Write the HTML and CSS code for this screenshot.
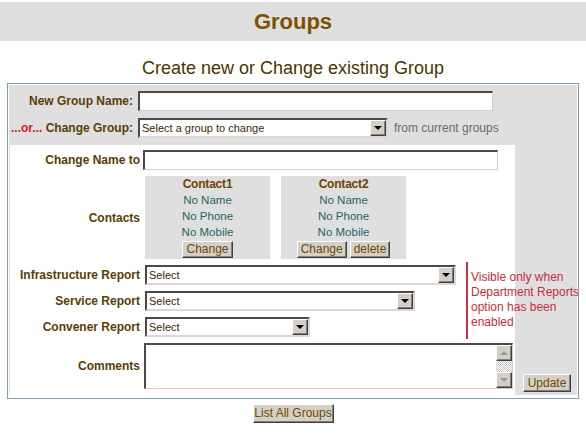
FILE: index.html
```html
<html>
  <head>
    <title>
    Groups
    </title>
    <link rel="stylesheet" href="styles.css">
  </head>
  <body>
    <div class="banner">Groups</div>
    <div class="subtitle">Create new or Change existing Group</div>
    <div class="frame">
      <div class="panel">
        <div class="pick">
          <label class="lbl">New Group Name:</label>
          <input class="txt name-new" type="text">
          <label class="lbl"><span class="or">...or...</span> Change Group:</label>
          <div class="pick-row">
            <div class="sel w250">
              <select><option>Select a group to change</option></select>
              <span class="drop"><i class="tri-down"></i></span>
            </div>
            <span class="hint">from current groups</span>
          </div>
        </div>
        <div class="body">
          <div class="main">
            <label class="lbl">Change Name to</label>
            <input class="txt name-chg" type="text">

            <label class="lbl">Contacts</label>
            <div class="contacts">
              <div class="contact">
                <div class="c-title">Contact1</div>
                <div class="c-item">No Name</div>
                <div class="c-item">No Phone</div>
                <div class="c-item">No Mobile</div>
                <div class="c-btns"><button class="btn">Change</button></div>
              </div>
              <div class="contact">
                <div class="c-title">Contact2</div>
                <div class="c-item">No Name</div>
                <div class="c-item">No Phone</div>
                <div class="c-item">No Mobile</div>
                <div class="c-btns"><button class="btn">Change</button><button class="btn">delete</button></div>
              </div>
            </div>

            <div class="note">Visible only when Department Reports option has been enabled</div>

            <label class="lbl">Infrastructure Report</label>
            <div class="sel w311">
              <select><option>Select</option></select>
              <span class="drop"><i class="tri-down"></i></span>
            </div>

            <label class="lbl">Service Report</label>
            <div class="sel w270">
              <select><option>Select</option></select>
              <span class="drop"><i class="tri-down"></i></span>
            </div>

            <label class="lbl">Convener Report</label>
            <div class="sel w165">
              <select><option>Select</option></select>
              <span class="drop"><i class="tri-down"></i></span>
            </div>

            <label class="lbl">Comments</label>
            <div class="ta">
              <textarea></textarea>
              <div class="vscroll">
                <span class="sbtn"><i class="tri-up"></i></span>
                <span class="track"></span>
                <span class="sbtn"><i class="tri-dn"></i></span>
              </div>
            </div>
          </div>
          <div class="side">
            <button class="btn btn-update">Update</button>
          </div>
        </div>
      </div>
    </div>
    <div class="foot">
      <button class="btn btn-list">List All Groups</button>
    </div>
  </body>
</html>
```

FILE: styles.css
```css
body {
  margin: 0;
  font-family: "Liberation Sans", Arial, sans-serif;
  font-size: 12px;
  color: #5a3d05;
  background-color: #fff;
}
.banner,
.panel,
.contact {
  background-color: #dfdfdf;
}
.banner {
  margin-top: 2px;
  height: 39px;
  line-height: 39px;
  text-align: center;
  font-size: 22px;
  font-weight: bold;
  color: #7a5200;
}
.subtitle {
  margin: 17px 0 4px;
  text-align: center;
  font-size: 18px;
  line-height: 21px;
  color: #4d3300;
}
.frame {
  margin: 0 7px;
  padding: 1px 1px 3px;
  border: 1px solid #7f9db9;
  background-color: #fff;
}
.pick {
  display: grid;
  grid-template-columns: 124px auto;
  column-gap: 5px;
  row-gap: 7px;
  padding: 6px 0 7px;
  align-items: center;
}
.lbl {
  text-align: right;
  font-weight: bold;
  white-space: nowrap;
  color: #5a3d05;
}
.or {
  color: #d0202a;
}
.pick-row {
  display: flex;
  align-items: center;
  gap: 6px;
}
.hint {
  color: #6a6a6a;
}
.txt,
.sel,
.ta {
  box-sizing: border-box;
  height: 20px;
  border-width: 2px 1px 1px 2px;
  border-style: solid;
  border-color: #4a4a4a #dcc8c8 #dcc8c8 #4a4a4a;
  background-color: #fff;
}
.txt {
  padding: 0 3px;
  font-family: "Liberation Sans", Arial, sans-serif;
  font-size: 12px;
  outline: none;
}
.name-new {
  width: 355px;
}
.name-chg {
  width: 355px;
  margin-left: -2px;
  grid-column: 2 / 4;
  justify-self: start;
}
.sel {
  display: flex;
  align-items: center;
  border-width: 2px;
  border-color: #4a4a4a #e0d4d4 #e0d4d4 #4a4a4a;
}
.sel select {
  flex: 1;
  min-width: 0;
  height: 16px;
  padding: 0 2px;
  border: 0;
  outline: none;
  -webkit-appearance: none;
  appearance: none;
  background: transparent;
  font-family: "Liberation Sans", Arial, sans-serif;
  font-size: 11px;
  color: #3a2a00;
}
.w250 { width: 250px; }
.w311 { width: 311px; }
.w270 { width: 270px; }
.w165 { width: 165px; }
.drop,
.sbtn {
  box-sizing: border-box;
  display: flex;
  align-items: center;
  justify-content: center;
  width: 16px;
  height: 16px;
  background-color: #d4d0c8;
  border: 1px solid;
  border-color: #fff #404040 #404040 #fff;
  box-shadow: inset -1px -1px #808080;
}
.tri-down,
.tri-dn {
  width: 0;
  height: 0;
  border-left: 4px solid transparent;
  border-right: 4px solid transparent;
  border-top: 4px solid #000;
}
.tri-up {
  width: 0;
  height: 0;
  border-left: 4px solid transparent;
  border-right: 4px solid transparent;
  border-bottom: 4px solid #9a9a9a;
}
.tri-dn {
  border-top-color: #9a9a9a;
}
.body {
  display: flex;
}
.main {
  width: 505px;
  margin-left: 1px;
  padding: 5px 0 6px;
  background-color: #fff;
  display: grid;
  grid-template-columns: 130px 316px 49px;
  grid-template-rows: 20px 83px 20px 20px 20px 46px;
  column-gap: 5px;
  row-gap: 6px;
  align-items: center;
}
.main .lbl {
  grid-column: 1;
}
.contacts,
.ta {
  grid-column: 2 / 4;
}
.main .sel {
  grid-column: 2;
}
.contacts {
  display: flex;
  gap: 11px;
  align-self: stretch;
}
.contact {
  width: 125px;
  text-align: center;
  line-height: 16px;
}
.c-title {
  font-weight: bold;
  letter-spacing: -0.2px;
  color: #6b4400;
}
.c-item {
  font-size: 11.5px;
  color: #1f6363;
}
.c-btns {
  display: flex;
  justify-content: center;
  gap: 3px;
  margin-top: 1px;
}
.btn {
  box-sizing: border-box;
  height: 17px;
  padding: 0 3px;
  font-family: "Liberation Sans", Arial, sans-serif;
  font-size: 12px;
  line-height: 13px;
  color: #6b4b00;
  background-color: #d4d0c8;
  border: 1px solid;
  border-color: #fff #404040 #404040 #fff;
  box-shadow: inset -1px -1px #808080;
}
.note {
  grid-column: 3;
  grid-row: 3 / 6;
  align-self: stretch;
  justify-self: start;
  position: relative;
  width: 118px;
  margin: -3px 0 -2px;
  padding: 8px 0 0 3px;
  border-left: 2px solid #c8324a;
  color: #c0303a;
  line-height: 15px;
}
.ta {
  display: flex;
  width: 369px;
  height: 46px;
  margin-left: -1px;
  justify-self: start;
}
.ta textarea {
  flex: 1;
  border: 0;
  outline: none;
  resize: none;
  background: transparent;
}
.vscroll {
  display: flex;
  flex-direction: column;
  width: 16px;
}
.track {
  flex: 1;
  background-image: repeating-conic-gradient(#c8c8c8 0 25%, #fff 0 50%);
  background-size: 2px 2px;
}
.side {
  flex: 1;
  display: flex;
  align-items: flex-end;
  padding: 0 0 3px 8px;
}
.btn-update {
  height: 18px;
  width: 48px;
}
.foot {
  margin-top: 5px;
  text-align: center;
}
.btn-list {
  height: 19px;
  width: 81px;
  padding: 0;
}
```
